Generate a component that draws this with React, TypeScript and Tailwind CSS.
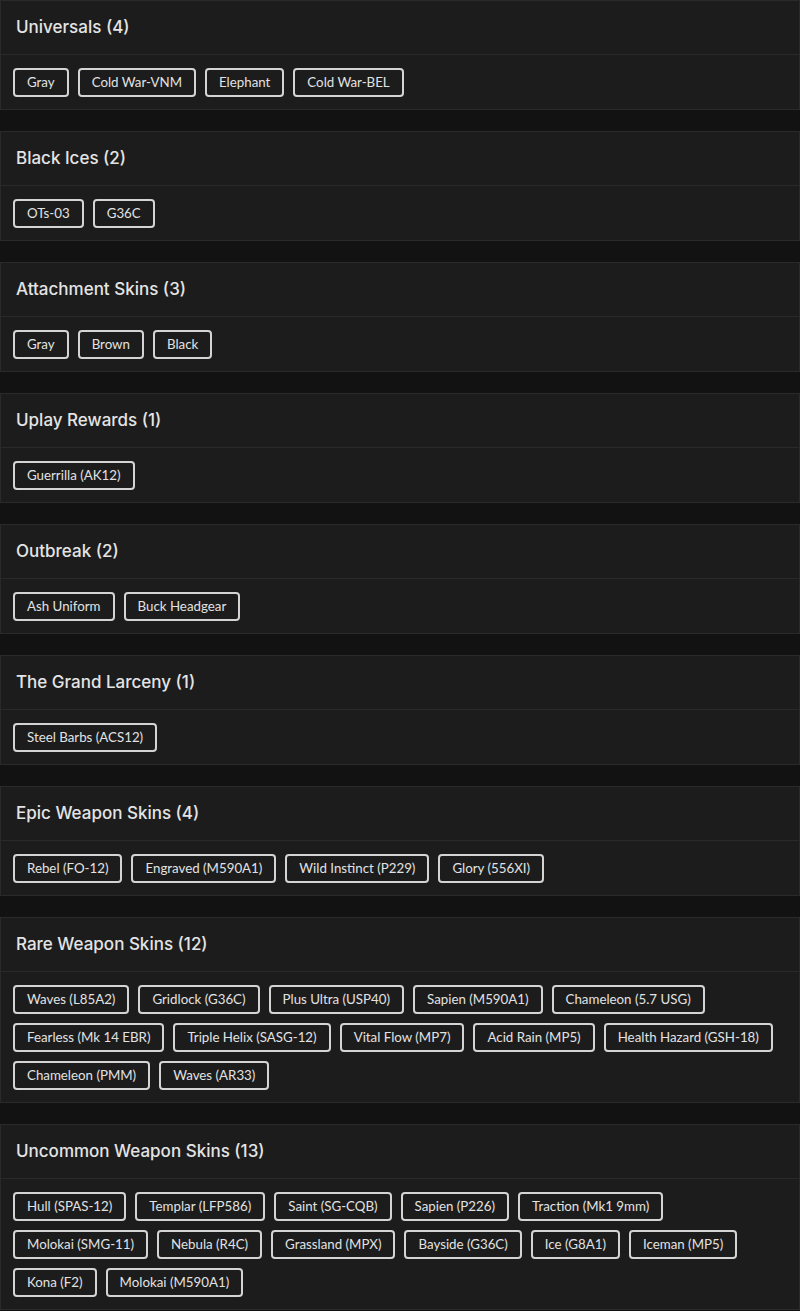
const sections: { title: string; items: string[] }[] = [
  { title: "Universals (4)", items: ["Gray", "Cold War-VNM", "Elephant", "Cold War-BEL"] },
  { title: "Black Ices (2)", items: ["OTs-03", "G36C"] },
  { title: "Attachment Skins (3)", items: ["Gray", "Brown", "Black"] },
  { title: "Uplay Rewards (1)", items: ["Guerrilla (AK12)"] },
  { title: "Outbreak (2)", items: ["Ash Uniform", "Buck Headgear"] },
  { title: "The Grand Larceny (1)", items: ["Steel Barbs (ACS12)"] },
  {
    title: "Epic Weapon Skins (4)",
    items: ["Rebel (FO-12)", "Engraved (M590A1)", "Wild Instinct (P229)", "Glory (556XI)"],
  },
  {
    title: "Rare Weapon Skins (12)",
    items: [
      "Waves (L85A2)",
      "Gridlock (G36C)",
      "Plus Ultra (USP40)",
      "Sapien (M590A1)",
      "Chameleon (5.7 USG)",
      "Fearless (Mk 14 EBR)",
      "Triple Helix (SASG-12)",
      "Vital Flow (MP7)",
      "Acid Rain (MP5)",
      "Health Hazard (GSH-18)",
      "Chameleon (PMM)",
      "Waves (AR33)",
    ],
  },
  {
    title: "Uncommon Weapon Skins (13)",
    items: [
      "Hull (SPAS-12)",
      "Templar (LFP586)",
      "Saint (SG-CQB)",
      "Sapien (P226)",
      "Traction (Mk1 9mm)",
      "Molokai (SMG-11)",
      "Nebula (R4C)",
      "Grassland (MPX)",
      "Bayside (G36C)",
      "Ice (G8A1)",
      "Iceman (MP5)",
      "Kona (F2)",
      "Molokai (M590A1)",
    ],
  },
];

export default function App() {
  return (
    <div className="min-h-[1311px] bg-[#121212] flex flex-col gap-[21px] text-[#e6e6e6]">
      {sections.map((s) => (
        <section key={s.title} className="bg-[#1c1c1c] border border-[#2a2a2a]">
          <div className="h-[54px] flex items-center px-[15px] border-b border-[#2a2a2a]">
            <h2
              className="text-[17px] font-medium text-[#e4e4e4]"
              style={{ fontFamily: "Inter, 'Noto Sans', sans-serif" }}
            >
              {s.title}
            </h2>
          </div>
          <div
            className="flex flex-wrap gap-x-[9px] gap-y-[9px] px-[12px] pt-[13px] pb-[12px]"
            style={{ fontFamily: "Lato, 'Open Sans', sans-serif" }}
          >
            {s.items.map((it, i) => (
              <span
                key={i}
                className="h-[29px] flex items-center px-[12px] border-2 border-[#d4d4d4] rounded-[4px] text-[13.3px] text-[#e2e2e2] whitespace-nowrap"
              >
                {it}
              </span>
            ))}
          </div>
        </section>
      ))}
    </div>
  );
}
